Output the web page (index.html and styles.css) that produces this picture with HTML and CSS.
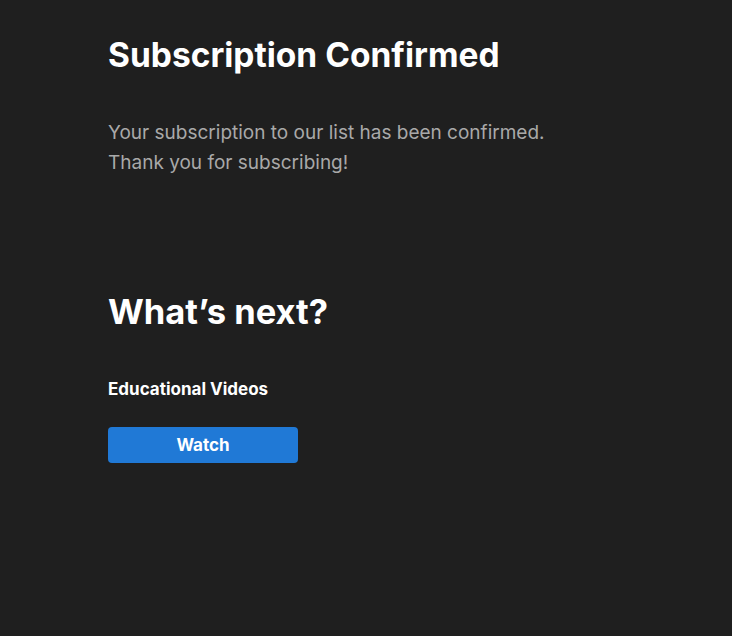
FILE: index.html
```html
<!DOCTYPE html>
<html lang="en">
<head>
    <meta charset="UTF-8">
    <meta name="viewport" content="width=device-width, initial-scale=1.0">
    <title>Subscription Confirmed</title>
    <link rel="stylesheet" href="styles.css">
</head>
<body>
    <div class="container">
        <section class="confirm">
            <h1>Subscription Confirmed</h1>
            <p>Your subscription to our list has been confirmed.<br>Thank you for subscribing!</p>
        </section>

        <section class="next">
            <h2>What&rsquo;s next?</h2>
            <h3>Educational Videos</h3>
            <a href="#" class="btn">Watch</a>
        </section>
    </div>
</body>
</html>
```

FILE: styles.css
```css
body {
    font-family: Inter, "Noto Sans", sans-serif;
    margin: 0;
    padding: 0;
    background-color: #1f1f1f;
    color: #fff;
}
.container {
    padding: 35px 108px 0;
}
h1, h2 {
    font-size: 33.5px;
    font-weight: 700;
    margin: 0;
    line-height: 40px;
}
h2 {
    font-size: 34.5px;
}
.confirm p {
    margin: 43px 0 0;
    color: #a9a9a9;
    font-size: 19px;
    line-height: 30px;
}
.next {
    margin-top: 114px;
}
h3 {
    margin: 46px 0 0;
    font-size: 17px;
    font-weight: 700;
    line-height: 22px;
}
.btn {
    display: block;
    width: 190px;
    height: 36px;
    margin-top: 27px;
    background-color: #2079d6;
    color: #fff;
    border-radius: 4px;
    text-align: center;
    line-height: 36px;
    font-size: 17px;
    font-weight: 700;
    text-decoration: none;
}
```
